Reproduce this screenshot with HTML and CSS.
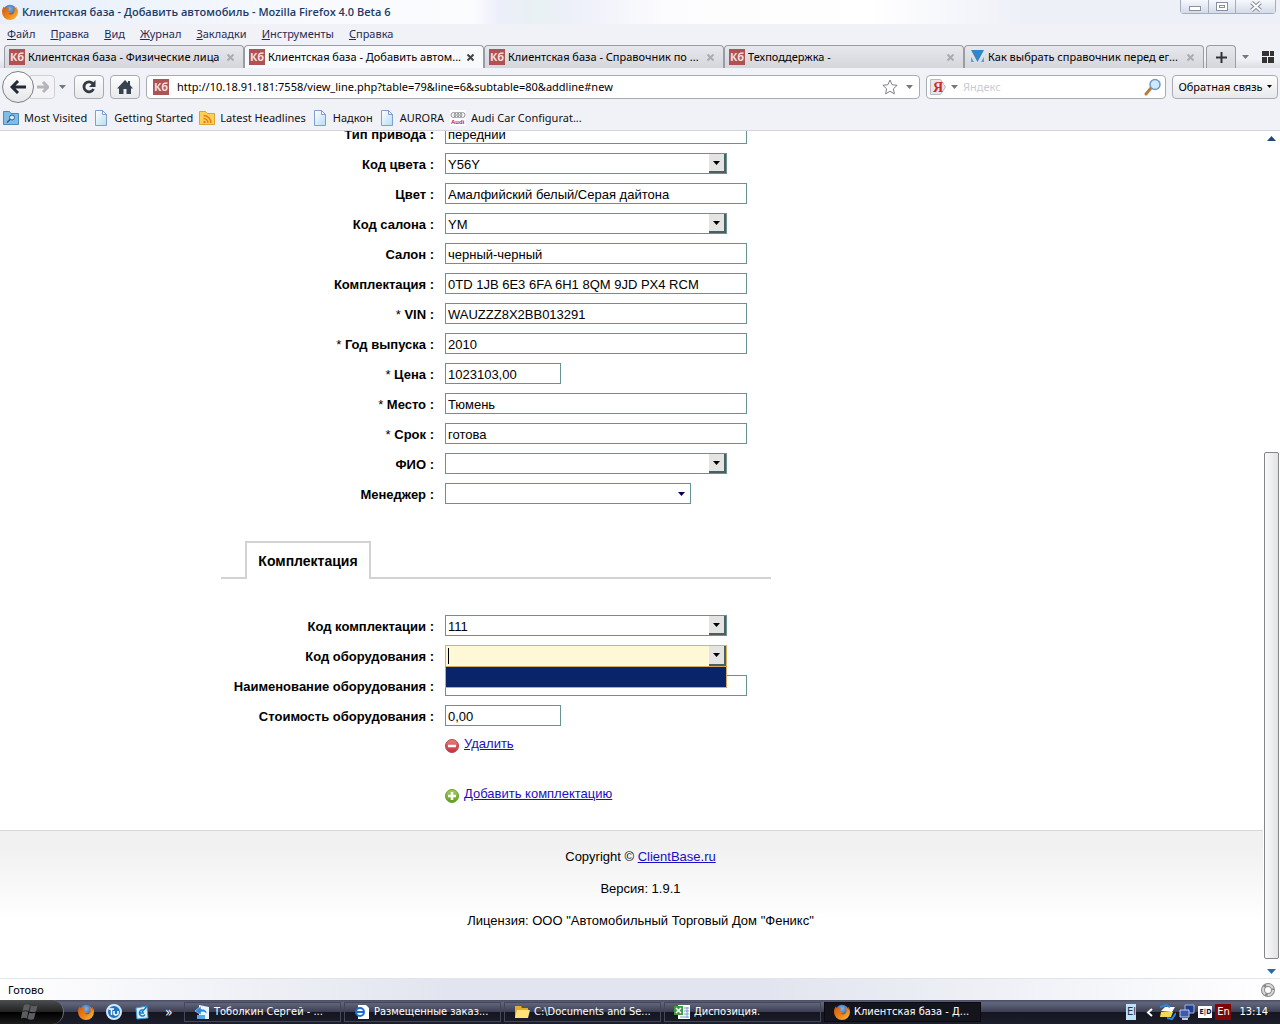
FILE: index.html
```html
<!DOCTYPE html>
<html lang="ru">
<head>
<meta charset="utf-8">
<title>Клиентская база - Добавить автомобиль</title>
<link rel="stylesheet" href="styles.css">
</head>
<body>
<svg class="defs" aria-hidden="true">
  <defs>
    <radialGradient id="fox-globe" cx=".5" cy=".3" r=".7"><stop offset="0" stop-color="#7fb8ee"/><stop offset="1" stop-color="#16357f"/></radialGradient>
    <linearGradient id="fox-fur" x1="0" y1="0" x2="1" y2="1"><stop offset="0" stop-color="#d4560c"/><stop offset=".6" stop-color="#ee8a1a"/><stop offset="1" stop-color="#f8c83c"/></linearGradient>
    <linearGradient id="page-fill" x1="0" y1="0" x2="1" y2="1"><stop offset="0" stop-color="#fff"/><stop offset="1" stop-color="#b8dcf4"/></linearGradient>
    <linearGradient id="red-ball" x1="0" y1="0" x2="0" y2="1"><stop offset="0" stop-color="#ee7f7f"/><stop offset="1" stop-color="#c22f38"/></linearGradient>
    <linearGradient id="green-ball" x1="0" y1="0" x2="0" y2="1"><stop offset="0" stop-color="#a8d35a"/><stop offset="1" stop-color="#5c9c1c"/></linearGradient>
  </defs>
  <symbol id="i-fox" viewBox="0 0 16 16">
    <circle cx="8" cy="7.5" r="6.8" fill="url(#fox-globe)"/>
    <path d="M2 2.200C.4 4 0 6.200 0 8a8 8 0 0 0 16 0c0-2.600-1-4.500-2.400-5.600.8 1.600 1 2.800.9 3.700C13.800 4 12.500 3.300 11.500 2.600c1.500 2.700 1.300 5.800-.4 7.100-1.700 1.300-4 .8-4.800-.6 1.200.3 2-.3 2.700-.9-1.300-.3-3.200-.6-3.200-2 .5-.6 1.500-.9 1.700-1.500-.8-.1-1.800-.2-2.300-.9-.9 0-1.700.3-2.200.7C2.400 4 2 3.200 2 2.200z" fill="url(#fox-fur)"/>
  </symbol>
  <symbol id="i-page" viewBox="0 0 16 16">
    <path d="M2.500.5h7l4 4v11h-11z" fill="url(#page-fill)" stroke="#7e9fd0"/>
    <path d="M9.500.5v4h4z" fill="#fff" stroke="#7e9fd0"/>
  </symbol>
  <symbol id="i-down" viewBox="0 0 7 4"><path d="M0 0h7L3.500 4z" fill="currentColor"/></symbol>
  <symbol id="i-close" viewBox="0 0 9 9"><path d="M1.500 1.500l6 6M7.500 1.500l-6 6" stroke="currentColor" stroke-width="2"/></symbol>
</svg>

<header class="chrome">
  <div class="titlebar">
    <svg class="icon16"><use href="#i-fox"/></svg>
    <span class="window-title">Клиентская база - Добавить автомобиль - Mozilla Firefox 4.0 Beta 6</span>
    <div class="window-buttons">
      <button type="button" aria-label="Свернуть"><svg width="14" height="11"><rect x="1.500" y="5.500" width="11" height="4" fill="#fff" stroke="#8a90a0"/></svg></button>
      <button type="button" aria-label="Развернуть"><svg width="14" height="11"><rect x="1.500" y="1.500" width="11" height="8" fill="#fff" stroke="#8a90a0"/><rect x="4.500" y="4.500" width="5" height="2" fill="#fff" stroke="#8a90a0"/></svg></button>
      <button type="button" class="wide" aria-label="Закрыть"><svg width="14" height="11"><path d="M2.500 1.500L11.500 9.500M11.500 1.500L2.500 9.500" stroke="#858b98" stroke-width="4"/><path d="M2.500 1.500L11.500 9.500M11.500 1.500L2.500 9.500" stroke="#fff" stroke-width="2"/></svg></button>
    </div>
  </div>

  <nav class="menubar">
    <a href="#"><u>Ф</u>айл</a><a href="#"><u>П</u>равка</a><a href="#"><u>В</u>ид</a><a href="#"><u>Ж</u>урнал</a><a href="#"><u>З</u>акладки</a><a href="#"><u>И</u>нструменты</a><a href="#"><u>С</u>правка</a>
  </nav>

  <div class="tabs">
    <div class="tab"><span class="kb">Кб</span><span class="tab-title">Клиентская база - Физические лица</span><button type="button" aria-label="Закрыть вкладку"><svg><use href="#i-close"/></svg></button></div>
    <div class="tab active"><span class="kb">Кб</span><span class="tab-title">Клиентская база - Добавить автом...</span><button type="button" aria-label="Закрыть вкладку"><svg><use href="#i-close"/></svg></button></div>
    <div class="tab"><span class="kb">Кб</span><span class="tab-title">Клиентская база - Справочник по ...</span><button type="button" aria-label="Закрыть вкладку"><svg><use href="#i-close"/></svg></button></div>
    <div class="tab"><span class="kb">Кб</span><span class="tab-title">Техподдержка -</span><button type="button" aria-label="Закрыть вкладку"><svg><use href="#i-close"/></svg></button></div>
    <div class="tab"><svg class="icon16" viewBox="0 0 16 16"><path d="M2 1h13L8.500 13z" fill="#2f86c8"/><path d="M2 8v5h3zM15 8v5h-3z" fill="#5f9fd0"/></svg><span class="tab-title">Как выбрать справочник перед ег...</span><button type="button" aria-label="Закрыть вкладку"><svg><use href="#i-close"/></svg></button></div>
    <button type="button" class="tab new-tab" aria-label="Новая вкладка"><svg width="11" height="11"><path d="M5.500 0v11M0 5.500h11" stroke="#333" stroke-width="2"/></svg></button>
    <div class="tab-tools">
      <svg class="caret"><use href="#i-down"/></svg>
      <svg width="12" height="12"><path d="M0 0h7v5H0zM8 0h4v5H8zM0 6h5v6H0zM6 6h6v6H6z" fill="#333"/></svg>
    </div>
  </div>

  <div class="navbar">
    <div class="history">
      <button type="button" class="back" aria-label="Назад"><svg width="16" height="14" viewBox="0 0 16 14"><path d="M8 1L2 7l6 6M2.500 7H16" fill="none" stroke="#222a35" stroke-width="3"/></svg></button>
      <button type="button" class="forward" aria-label="Вперёд"><svg width="12" height="12" viewBox="0 0 12 12"><path d="M6 1l5 5-5 5M0 6h10" fill="none" stroke="#b4b6bb" stroke-width="3"/></svg></button>
      <svg class="caret"><use href="#i-down"/></svg>
    </div>
    <button type="button" class="tool" aria-label="Обновить"><svg width="14" height="14" viewBox="0 0 14 14"><path d="M11 3.800A5 5 0 1 0 11.500 9" fill="none" stroke="#333a44" stroke-width="2.800"/><path d="M13.500 0v7H7z" fill="#333a44"/></svg></button>
    <button type="button" class="tool" aria-label="Домой"><svg width="16" height="14" viewBox="0 0 16 14"><path d="M8 0l3 3V1h2v4l3 3.500h-2V14H9.500V9h-3v5H2V8.500H0z" fill="#384350"/></svg></button>
    <label class="field urlbar"><span class="kb">Кб</span><input type="text" aria-label="Адрес" value="http://10.18.91.181:7558/view_line.php?table=79&amp;line=6&amp;subtable=80&amp;addline#new"><svg width="16" height="16" viewBox="0 0 16 16"><path d="M8 1l2.100 4.700 5 .6-3.700 3.500 1 5L8 12.300 3.600 14.800l1-5L.9 6.300l5-.6z" fill="#fff" stroke="#7c7f86"/></svg><svg class="caret"><use href="#i-down"/></svg></label>
    <label class="field search"><svg width="16" height="16" viewBox="0 0 16 16"><path d="M.5.5h10l5 7.500-5 7.500H.5z" fill="#e8e8ea" stroke="#b9bbc0"/><text x="3" y="13" class="ya">Я</text></svg><svg class="caret"><use href="#i-down"/></svg><input type="text" aria-label="Поиск" placeholder="Яндекс"><svg width="18" height="18" viewBox="0 0 18 18"><path d="M2 16l5-6" stroke="#b97a3c" stroke-width="3" stroke-linecap="round"/><circle cx="11" cy="6.500" r="5" fill="#cfe9fb" stroke="#6d9cc8" stroke-width="1.500"/></svg></label>
    <button type="button" class="feedback">Обратная связь <svg><use href="#i-down"/></svg></button>
  </div>

  <nav class="bookmarks">
    <a href="#"><svg class="icon16" viewBox="0 0 16 16"><path d="M.5 1.500h6l1.500 2h7.500v11H.5z" fill="#7fbce6" stroke="#4a8abf"/><circle cx="9" cy="7.500" r="2.500" fill="#d8effc" stroke="#2a5f96"/><path d="M7 9.500l-3 3" stroke="#2a5f96" stroke-width="1.500"/></svg>Most Visited</a>
    <a href="#"><svg class="icon16"><use href="#i-page"/></svg>Getting Started</a>
    <a href="#"><svg class="icon16" viewBox="0 0 16 16"><path d="M.5 1.500h6l1.500 2h7.500v11H.5z" fill="#fbd253" stroke="#d9a52a"/><circle cx="5.500" cy="12" r="1.200" fill="#e8791c"/><path d="M4.500 8.500a4.500 4.500 0 0 1 4.500 4.500M4.500 5.500a7.500 7.500 0 0 1 7.500 7.500" fill="none" stroke="#e8791c" stroke-width="1.500"/></svg>Latest Headlines</a>
    <a href="#"><svg class="icon16"><use href="#i-page"/></svg>Надкон</a>
    <a href="#"><svg class="icon16"><use href="#i-page"/></svg>AURORA</a>
    <a href="#"><svg class="icon16" viewBox="0 0 16 16"><path d="M0 0h16v16H0z" fill="#fff"/><g fill="none" stroke="#8f9297"><circle cx="3.500" cy="5" r="2.500"/><circle cx="6.500" cy="5" r="2.500"/><circle cx="9.500" cy="5" r="2.500"/><circle cx="12.500" cy="5" r="2.500"/></g><text x="1" y="14" class="audi">Audi</text></svg>Audi Car Configurat...</a>
  </nav>
</header>

<div class="viewport">
  <main class="page">
    <form class="form">
      <div class="row"><label for="f1"><b>Тип привода :</b></label><input id="f1" class="box" type="text" value="передний"></div>
      <div class="row"><label for="f2"><b>Код цвета :</b></label><div class="combo"><input id="f2" type="text" value="Y56Y"><button type="button" aria-label="Список"><svg><use href="#i-down"/></svg></button></div></div>
      <div class="row"><label for="f3"><b>Цвет :</b></label><input id="f3" class="box" type="text" value="Амалфийский белый/Серая дайтона"></div>
      <div class="row"><label for="f4"><b>Код салона :</b></label><div class="combo"><input id="f4" type="text" value="YM"><button type="button" aria-label="Список"><svg><use href="#i-down"/></svg></button></div></div>
      <div class="row"><label for="f5"><b>Салон :</b></label><input id="f5" class="box" type="text" value="черный-черный"></div>
      <div class="row"><label for="f6"><b>Комплектация :</b></label><input id="f6" class="box" type="text" value="0TD 1JB 6E3 6FA 6H1 8QM 9JD PX4 RCM"></div>
      <div class="row"><label for="f7">* <b>VIN :</b></label><input id="f7" class="box" type="text" value="WAUZZZ8X2BB013291"></div>
      <div class="row"><label for="f8">* <b>Год выпуска :</b></label><input id="f8" class="box" type="text" value="2010"></div>
      <div class="row"><label for="f9">* <b>Цена :</b></label><input id="f9" class="box short" type="text" value="1023103,00"></div>
      <div class="row"><label for="f10">* <b>Место :</b></label><input id="f10" class="box" type="text" value="Тюмень"></div>
      <div class="row"><label for="f11">* <b>Срок :</b></label><input id="f11" class="box" type="text" value="готова"></div>
      <div class="row"><label for="f12"><b>ФИО :</b></label><div class="combo"><input id="f12" type="text"><button type="button" aria-label="Список"><svg><use href="#i-down"/></svg></button></div></div>
      <div class="row"><label for="f13"><b>Менеджер :</b></label><div class="picker"><select id="f13"><option></option></select><svg><use href="#i-down"/></svg></div></div>

      <div class="section-tabs"><h2>Комплектация</h2></div>

      <div class="row"><label for="g1"><b>Код комплектации :</b></label><div class="combo"><input id="g1" type="text" value="111"><button type="button" aria-label="Список"><svg><use href="#i-down"/></svg></button></div></div>
      <div class="row"><label for="g2"><b>Код оборудования :</b></label><div class="combo focused"><span class="cursor"></span><input id="g2" type="text"><button type="button" aria-label="Список"><svg><use href="#i-down"/></svg></button><div class="options"></div></div></div>
      <div class="row"><label for="g3"><b>Наименование оборудования :</b></label><input id="g3" class="box" type="text"></div>
      <div class="row"><label for="g4"><b>Стоимость оборудования :</b></label><input id="g4" class="box short" type="text" value="0,00"></div>
      <div class="actions">
        <a href="#"><svg viewBox="0 0 14 14"><circle cx="7" cy="7" r="6.500" fill="url(#red-ball)" stroke="#b5444a"/><path d="M3 7h8" stroke="#fff" stroke-width="2.500"/></svg><span>Удалить</span></a>
        <a href="#"><svg viewBox="0 0 14 14"><circle cx="7" cy="7" r="6.500" fill="url(#green-ball)" stroke="#6a9f2c"/><path d="M3 7h8M7 3v8" stroke="#fff" stroke-width="2.500"/></svg><span>Добавить комплектацию</span></a>
      </div>
    </form>
    <footer class="footer">
      <p>Copyright © <a href="#">ClientBase.ru</a></p>
      <p>Версия: 1.9.1</p>
      <p>Лицензия: ООО "Автомобильный Торговый Дом "Феникс"</p>
    </footer>
  </main>
  <div class="scrollbar">
    <svg width="9" height="5"><path d="M0 5h9L4.500 0z" fill="#1c4a78"/></svg>
    <div class="track"><div class="thumb"></div></div>
    <svg width="9" height="5"><path d="M0 0h9L4.500 5z" fill="#2a6ba5"/></svg>
  </div>
</div>

<div class="statusbar"><span>Готово</span><svg class="icon16" viewBox="0 0 16 16"><circle cx="8" cy="8" r="5" fill="#fff" stroke="#8b8b8b" stroke-width="4"/><circle cx="8" cy="8" r="5" fill="none" stroke="#d8d8d8" stroke-width="2" stroke-dasharray="8 2.500"/></svg></div>

<div class="taskbar">
  <button type="button" class="start" aria-label="Пуск"><svg width="18" height="16" viewBox="0 0 18 16"><path d="M3 1q3-1.500 6 0L7.500 7q-3-1.500-6 0zM10 1.500q3 1.500 6.500 0L15 7.500q-3 1.500-6.500 0zM1.200 8q3-1.500 6 0L6 14.500q-3-1.500-6 0zM8 8.500q3 1.500 6.500 0L13 15q-3 1.500-6.500 0z" fill="#5b5d60"/></svg></button>
  <div class="quick">
    <svg class="icon16"><use href="#i-fox"/></svg>
    <svg class="icon16" viewBox="0 0 16 16"><circle cx="8" cy="8" r="7" fill="#1c74c4" stroke="#d5eaff" stroke-width="2"/><path d="M3 5h5M5.500 5v6M8 7v3q1.500 2 4 0V7" fill="none" stroke="#fff" stroke-width="1.500"/></svg>
    <svg class="icon16" viewBox="0 0 16 16"><path d="M2 4l11-2 1 12-11 1z" fill="#d9effc" stroke="#3f9ad6"/><path d="M10 6.500a3 3 0 1 0 1 4M5 9h5M8 8l6-7" fill="none" stroke="#1f7cc0" stroke-width="1.500"/></svg>
    <span>»</span>
  </div>
  <div class="tasks">
    <button type="button"><svg class="icon16" viewBox="0 0 16 16"><path d="M5 1l10 2v12H5z" fill="#e8f3fc"/><path d="M1 7l6-5v3q6 0 6 5-3-3-6-2v3z" fill="#2c86dc" stroke="#fff" stroke-width=".5"/><path d="M3 11h8v4H3z" fill="#5aa7e8"/></svg><span>Тоболкин Сергей - ...</span></button>
    <button type="button"><svg class="icon16" viewBox="0 0 16 16"><path d="M4 1h8l3 3v11H4z" fill="#fff"/><circle cx="6" cy="8" r="4" fill="#fff" stroke="#1c6cd0" stroke-width="2"/><path d="M2 8h8" stroke="#1c6cd0" stroke-width="2"/></svg><span>Размещенные заказ...</span></button>
    <button type="button"><svg class="icon16" viewBox="0 0 16 16"><path d="M1 2h6l1 2h6v10H1z" fill="#e2ac2c"/><path d="M3 6h13l-2 8H1z" fill="#ffe27a"/></svg><span>C:\Documents and Se...</span></button>
    <button type="button"><svg class="icon16" viewBox="0 0 16 16"><path d="M4 1h12v14H4z" fill="#fff"/><path d="M10 4h5M10 7h5M6 13h9M10 10h5M13 3v11" stroke="#7d9acb"/><path d="M0 2h9v9H0z" fill="#3f9a3f"/><path d="M2 4l5 5M7 4L2 9" stroke="#fff" stroke-width="1.500"/></svg><span>Диспозиция.</span></button>
    <button type="button" class="current"><svg class="icon16"><use href="#i-fox"/></svg><span>Клиентская база - Д...</span></button>
  </div>
  <div class="tray">
    <span class="lang-small">El</span>
    <svg width="7" height="9"><path d="M6 1L2 4.500 6 8" fill="none" stroke="#fff" stroke-width="2"/></svg>
    <svg class="icon16" viewBox="0 0 16 16"><path d="M1 7l4-4h10l-3 5z" fill="#fff"/><path d="M1 8h12l-2 5H0z" fill="#f3d951"/><path d="M0 3l6-2 4 2M16 9l-4 6-5-1" fill="none" stroke="#2a8ae0" stroke-width="2"/></svg>
    <svg class="icon16" viewBox="0 0 16 16"><path d="M6 1h9v8H6z" fill="#1b3f96" stroke="#a9b3d8"/><path d="M1 6h9v7H1z" fill="#3b5ab0" stroke="#c3cae4"/><path d="M3 15h6" stroke="#c3cae4" stroke-width="2"/></svg>
    <span class="ed">E|D</span>
    <span class="lang">En</span>
    <time>13:14</time>
  </div>
</div>
</body>
</html>
```
FILE: styles.css
```css
* { box-sizing: border-box; }
html, body { height: 100%; }
body {
  margin: 0;
  display: flex;
  flex-direction: column;
  overflow: hidden;
  background: #fff;
  color: #000;
  font: 12px/16px "Noto Sans", sans-serif;
}
button, input, select { font: inherit; color: inherit; margin: 0; padding: 0; border: 0; background: none; border-radius: 0; }
input { min-width: 0; outline: 0; }
svg { display: block; flex: none; }
.defs { position: absolute; width: 0; height: 0; }
.icon16 { width: 16px; height: 16px; flex: none; }
.caret { width: 7px; height: 4px; color: #777; }

/* Browser window */
.chrome { flex: none; background: #f1f2f8; border-bottom: 1px solid #d3d5dd; font-size: 11px; }
.titlebar {
  display: flex;
  align-items: center;
  height: 24px;
  padding-left: 2px;
  gap: 4px;
  background: linear-gradient(90deg, #e6effa, #f8fafd 25%, #fbfcfe 37%, #eceffa 39%, #e8f1f3 42%, #eef0fa 45%, #fcfcfe 52%, #fff 68%, #eef0f8 80%, #eef0f8);
}
.window-title { font: 600 11px/16px "Open Sans", sans-serif; color: #1c3a68; flex: 1; }
.window-buttons { display: flex; align-self: flex-start; height: 14px; margin-right: 4px; border: 1px solid #a5adc0; border-top: 0; border-radius: 0 0 4px 4px; }
.window-buttons button { width: 27px; display: grid; place-items: center; background: linear-gradient(#f6f8fc, #d4dbe9); }
.window-buttons button + button { border-left: 1px solid #a5adc0; }
.window-buttons .wide { width: 40px; }
.menubar { display: flex; align-items: center; gap: 15px; height: 20px; padding-left: 7px; }
.menubar a { color: #1f2d55; text-decoration: none; }

.tabs { display: flex; height: 23px; padding: 0 6px 0 4px; margin-top: 1px; background: linear-gradient(#f1f2f8 60%, #dcdde2); }
.tab { flex: 0 1 240px; min-width: 0; display: flex; align-items: center; gap: 3px; padding: 0 8px 0 4px; border: 1px solid #9a9ca3; border-bottom: 0; border-radius: 4px 4px 0 0; background: linear-gradient(#e7e8ed, #d5d6dc); }
.tab.active { background: #f8f9fc; }
.tab-title { flex: 1; white-space: nowrap; overflow: hidden; }
.tab button { color: #a9abb0; }
.tab button svg { width: 9px; height: 9px; }
.tab.active button { color: #444; }
.tab.new-tab { flex: 0 0 30px; margin-left: 2px; padding: 0; justify-content: center; }
.tab-tools { flex: 1; display: flex; align-items: center; justify-content: flex-end; gap: 13px; }
.kb { flex: none; width: 16px; height: 16px; background: #ac5354; color: #f6dcdc; font: bold 11px/16px "Open Sans", sans-serif; text-align: center; }

.navbar { display: flex; align-items: center; height: 37px; padding: 0 4px 0 2px; }
.history { display: flex; align-items: center; width: 72px; }
.back { width: 32px; height: 32px; display: grid; place-items: center; border: 1px solid #7d8088; border-radius: 50%; background: linear-gradient(#fff, #e6e7ea); z-index: 1; }
.forward { width: 25px; height: 24px; margin-left: -4px; display: grid; place-items: center; border: 1px solid #cfd0d5; border-radius: 0 4px 4px 0; background: #f4f4f7; }
.history .caret { margin-left: 4px; }
.tool { width: 30px; height: 24px; margin-right: 6px; display: grid; place-items: center; border: 1px solid #a9abb2; border-radius: 4px; background: linear-gradient(#fdfdfd, #e8e9ec); }
.field { display: flex; align-items: center; height: 24px; padding: 0 6px; border: 1px solid #a9abb2; border-radius: 4px; background: #fff; }
.field input { flex: 1; }
.urlbar { flex: 1; gap: 8px; }
.urlbar .kb + input { height: 20px; }
.search { width: 240px; margin: 0 6px; padding: 0 3px; gap: 5px; }
.search input { height: 20px; }
.search input::placeholder { color: #c9cbd2; opacity: 1; }
.ya { font: bold 14px "Liberation Serif", serif; fill: #d4291f; }
.feedback { display: flex; align-items: center; justify-content: center; gap: 4px; width: 106px; height: 24px; margin-right: -2px; border: 1px solid #a9abb2; border-radius: 4px; background: linear-gradient(#fdfdfd, #e8e9ec); white-space: nowrap; }
.feedback svg { width: 5px; height: 3px; }
.bookmarks { display: flex; align-items: center; height: 25px; padding-left: 3px; gap: 6px; }
.bookmarks a { display: flex; align-items: center; gap: 5px; color: #111; text-decoration: none; white-space: nowrap; }
.audi { font: bold 6px "Liberation Sans", sans-serif; fill: #c8143c; }

/* Web page */
.viewport { flex: 1; min-height: 0; display: flex; overflow: hidden; }
.page { flex: 1; min-width: 0; overflow: hidden; font: 13px/16px "Liberation Sans", Arial, sans-serif; }
.form { width: 550px; margin: -8px 0 0 221px; }
.row { display: grid; grid-template-columns: 213px 1fr; column-gap: 11px; align-items: start; height: 30px; }
.row label { text-align: right; padding-top: 4px; white-space: nowrap; }
.box, .combo, .picker { width: 302px; height: 21px; border: 1px solid #679393; background: #fff; }
.box, .combo input { padding: 2px 2px 0; }
.box.short { width: 116px; }
.combo { position: relative; display: flex; width: 282px; }
.combo input { flex: 1; }
.combo button { width: 17px; display: grid; place-items: center; background: #e4e4e2; border-right: 2px solid #4d5f5f; border-bottom: 2px solid #4d5f5f; }
.combo button svg, .picker svg { width: 7px; height: 4px; }
.combo.focused { height: 22px; border-color: #d9b45a; background: #fff8d6; align-items: stretch; }
.cursor { width: 1px; margin: 2px 0 2px 2px; background: #000; }
.options { position: absolute; top: 20px; left: -1px; width: 282px; height: 22px; border: 1px solid #d9a860; background: #0a246a; z-index: 1; }
.picker { display: grid; width: 246px; }
.picker > * { grid-area: 1 / 1; }
.picker select { appearance: none; width: 100%; }
.picker svg { place-self: center end; margin-right: 5px; color: #00005a; pointer-events: none; }
.section-tabs { display: flex; height: 38px; margin: 28px 0 36px; padding-left: 24px; border-bottom: 2px solid #d2d2d2; }
.section-tabs h2 { margin: 0 0 -2px; height: 38px; min-width: 126px; padding: 0 10px; border: 2px solid #d2d2d2; border-bottom: 0; background: #fff; font: bold 14px/36px "Liberation Sans", Arial, sans-serif; text-align: center; }
.actions { display: grid; gap: 34px; padding: 1px 0 0 224px; justify-items: start; }
.actions a { display: flex; gap: 5px; color: #1a0dc8; text-decoration: none; }
.actions span { text-decoration: underline; }
.actions svg { width: 14px; height: 14px; margin-top: 3px; margin-bottom: -1px; }
.footer { margin-top: 28px; padding: 18px 0 16px 18px; border-top: 1px solid #d8d8d8; background: linear-gradient(#f1f1f1 16px, #fff 90px); text-align: center; }
.footer p { margin: 0 0 16px; }
.footer a { color: #1a0dc8; }
.scrollbar { width: 17px; display: flex; flex-direction: column; align-items: center; padding: 5px 0 4px; }
.track { flex: 1; align-self: stretch; display: flex; flex-direction: column; justify-content: flex-end; padding: 0 1px 10px; }
.thumb { height: 62%; min-height: 20px; flex: 0 0 62%; border: 1px solid #85868a; border-radius: 2px; background: linear-gradient(90deg, #fafafa, #e2e2e4); }

/* Status bar and desktop task bar */
.statusbar { flex: none; display: flex; align-items: center; justify-content: space-between; height: 22px; padding: 0 4px 0 8px; border-top: 1px solid #e0e4ec; background: linear-gradient(90deg, #fff, #e2e5ef 35%, #e2e5ef 60%, #fff); font-size: 11px; }
.taskbar { flex: none; display: flex; align-items: center; height: 24px; background: linear-gradient(#4a4d62, #62667c 12%, #3b3e52 50%, #15161f 52%, #1c1e2c); color: #fff; font: 11px/16px "DejaVu Sans Condensed", "DejaVu Sans", sans-serif; }
.start { width: 64px; height: 24px; padding-right: 4px; display: grid; place-items: center; border-radius: 0 12px 12px 0; background: linear-gradient(#4c4e50, #222 48%, #000 52%, #1c1c1c); border-right: 1px solid #6c6e78; }
.quick { display: flex; align-items: center; gap: 12px; width: 120px; padding-left: 14px; }
.quick span { margin-left: 3px; font-size: 14px; }
.tasks { flex: 1; display: flex; gap: 3px; min-width: 0; }
.tasks button { flex: 0 1 157px; min-width: 0; display: flex; align-items: center; gap: 4px; height: 20px; padding-left: 9px; border: 1px solid #444759; text-align: left; white-space: nowrap; }
.tasks .current { background: #14151c; border-color: #0a0a10; }
.tray { display: flex; align-items: center; gap: 3px; padding-right: 12px; }
.tray time { margin-left: 5px; }
.lang-small { width: 10px; background: #bfe2f7; color: #234; text-align: center; overflow: hidden; margin-right: 7px; }
.tray svg:first-of-type { margin-right: 4px; }
.ed { width: 14px; height: 12px; background: #fff; color: #113; font-size: 7px; line-height: 12px; font-weight: bold; text-align: center; white-space: nowrap; overflow: hidden; }
.lang { width: 16px; background: #7c0808; text-align: center; }
```
